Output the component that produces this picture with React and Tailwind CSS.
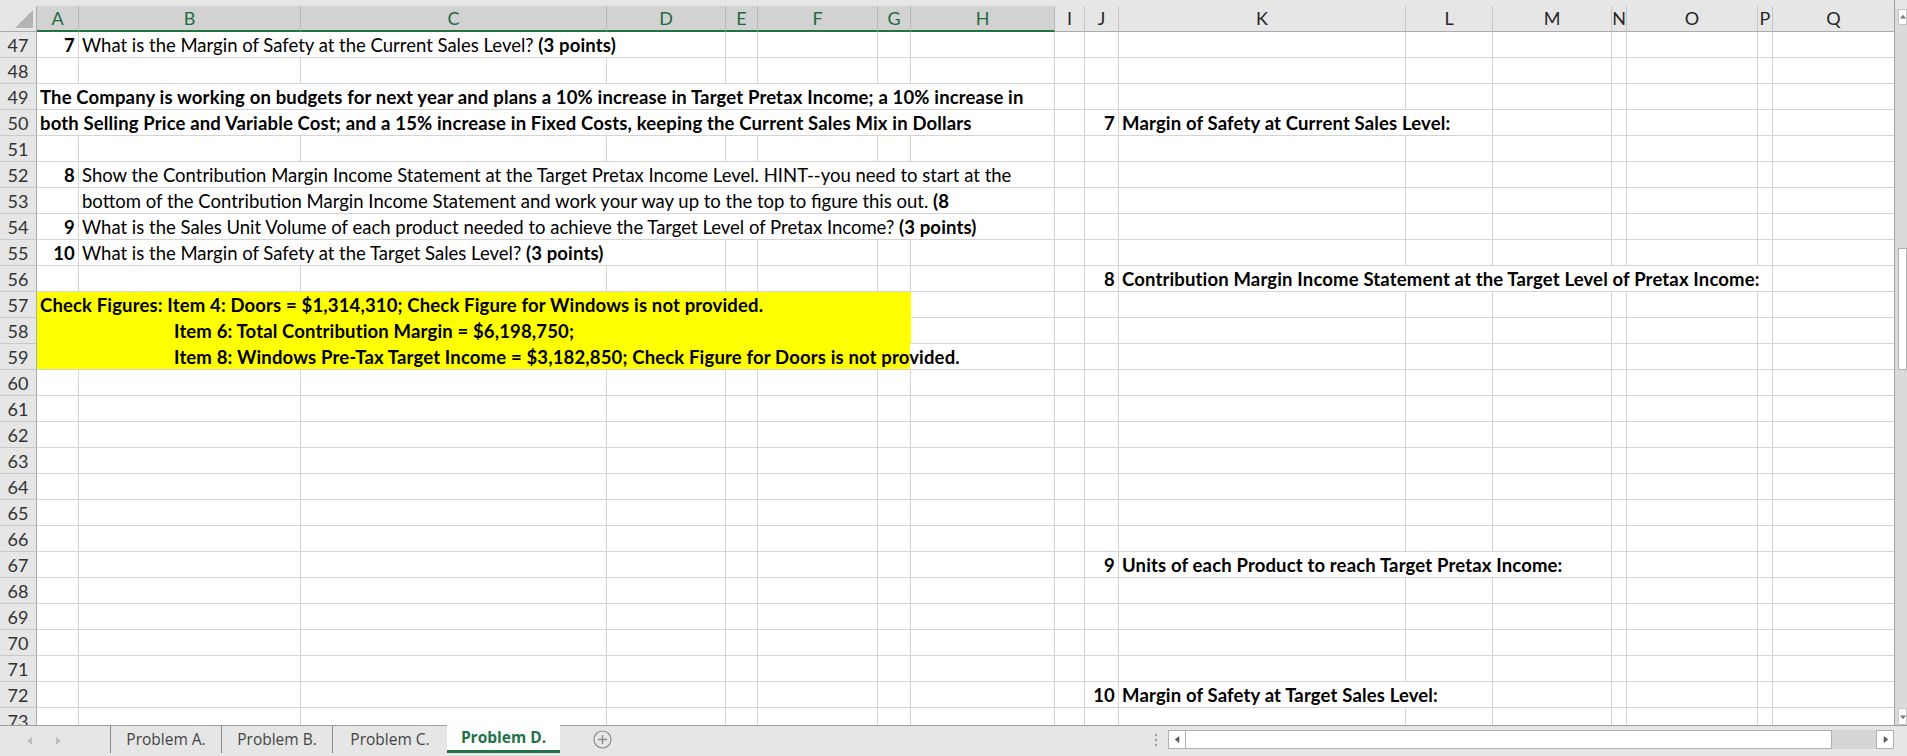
import React from 'react';

// column letters with their pixel widths, as they sit in the sheet
const cols = [
  { l: 'A', w: 'w-[42px]' },
  { l: 'B', w: 'w-[222px]' },
  { l: 'C', w: 'w-[306px]' },
  { l: 'D', w: 'w-[119px]' },
  { l: 'E', w: 'w-[32px]' },
  { l: 'F', w: 'w-[120px]' },
  { l: 'G', w: 'w-[33px]' },
  { l: 'H', w: 'w-[144px]' },
  { l: 'I', w: 'w-[30px]' },
  { l: 'J', w: 'w-[34px]' },
  { l: 'K', w: 'w-[287px]' },
  { l: 'L', w: 'w-[87px]' },
  { l: 'M', w: 'w-[119px]' },
  { l: 'N', w: 'w-[15px]' },
  { l: 'O', w: 'w-[131px]' },
  { l: 'P', w: 'w-[15px]' },
  { l: 'Q', w: 'w-[122px]' },
];

const selected = ['A', 'B', 'C', 'D', 'E', 'F', 'G', 'H'];

const YELLOW = 'bg-[#ffff00] border-[#ffff00]';

// cells with content; "to" means the text runs over into the next columns
const rowData = {
  47: [
    { c: 'A', w: 'w-[42px]', right: true, parts: [['7', true]] },
    { c: 'B', to: 'D', w: 'w-[647px]', parts: [['What is the Margin of Safety at the Current Sales Level? ', false], ['(3 points)', true]] },
  ],
  49: [
    { c: 'A', to: 'H', w: 'w-[1018px]', parts: [['The Company is working on budgets for next year and plans a 10% increase in Target Pretax Income; a 10% increase in', true]] },
  ],
  50: [
    { c: 'A', to: 'H', w: 'w-[1018px]', parts: [['both Selling Price and Variable Cost; and a 15% increase in Fixed Costs, keeping the Current Sales Mix in Dollars', true]] },
    { c: 'J', w: 'w-[34px]', right: true, parts: [['7', true]] },
    { c: 'K', to: 'L', w: 'w-[374px]', parts: [['Margin of Safety at Current Sales Level:', true]] },
  ],
  52: [
    { c: 'A', w: 'w-[42px]', right: true, parts: [['8', true]] },
    { c: 'B', to: 'H', w: 'w-[976px]', parts: [['Show the Contribution Margin Income Statement at the Target Pretax Income Level. HINT--you need to start at the', false]] },
  ],
  53: [
    { c: 'B', to: 'H', w: 'w-[976px]', parts: [['bottom of the Contribution Margin Income Statement and work your way up to the top to figure this out. ', false], ['(8', true]] },
  ],
  54: [
    { c: 'A', w: 'w-[42px]', right: true, parts: [['9', true]] },
    { c: 'B', to: 'H', w: 'w-[976px]', parts: [['What is the Sales Unit Volume of each product needed to achieve the Target Level of Pretax Income? ', false], ['(3 points)', true]] },
  ],
  55: [
    { c: 'A', w: 'w-[42px]', right: true, parts: [['10', true]] },
    { c: 'B', to: 'D', w: 'w-[647px]', parts: [['What is the Margin of Safety at the Target Sales Level? ', false], ['(3 points)', true]] },
  ],
  56: [
    { c: 'J', w: 'w-[34px]', right: true, parts: [['8', true]] },
    { c: 'K', to: 'P', w: 'w-[654px]', parts: [['Contribution Margin Income Statement at the Target Level of Pretax Income:', true]] },
  ],
  57: [
    { c: 'A', to: 'G', w: 'w-[874px]', bg: YELLOW, parts: [['Check Figures: Item 4: Doors = $1,314,310; Check Figure for Windows is not provided.', true]] },
  ],
  58: [
    { c: 'A', to: 'G', w: 'w-[874px]', bg: YELLOW, pad: 'pl-[137px]', parts: [['Item 6: Total Contribution Margin = $6,198,750;', true]] },
  ],
  59: [
    { c: 'A', to: 'H', w: 'w-[1018px]', bg: 'bg-[linear-gradient(to_right,#ffff00_873px,#ffffff_873px)] border-[#d4d4d4]', pad: 'pl-[137px]', parts: [['Item 8: Windows Pre-Tax Target Income = $3,182,850; Check Figure for Doors is not provided.', true]] },
  ],
  67: [
    { c: 'J', w: 'w-[34px]', right: true, parts: [['9', true]] },
    { c: 'K', to: 'M', w: 'w-[493px]', parts: [['Units of each Product to reach Target Pretax Income:', true]] },
  ],
  72: [
    { c: 'J', w: 'w-[34px]', right: true, parts: [['10', true]] },
    { c: 'K', to: 'L', w: 'w-[374px]', parts: [['Margin of Safety at Target Sales Level:', true]] },
  ],
};

const rowNumbers = Array.from({ length: 27 }, (_, i) => 47 + i);

const ColumnHeader = () => (
  <div className="flex h-[26px] shrink-0">
    <div className="w-[37px] shrink-0 bg-[#e6e6e6] border-r border-b border-[#ababab] flex items-end justify-end pr-[3px] pb-[3px]">
      <svg width="18" height="18" viewBox="0 0 18 18">
        <polygon points="18,0 18,18 0,18" fill="#b4b4b4" />
      </svg>
    </div>
    {cols.map((col) => {
      const isSel = selected.includes(col.l);
      return (
        <div
          key={col.l}
          className={`${col.w} shrink-0 flex items-center justify-center text-[18px] border-r ${
            isSel
              ? 'bg-[#d2d2d2] border-r-[#b8b8b8] border-b-2 border-b-[#217346] text-[#1e6b41]'
              : 'bg-[#e6e6e6] border-r-[#c6c6c6] border-b border-b-[#ababab] text-[#262626]'
          }`}
        >
          {col.l}
        </div>
      );
    })}
  </div>
);

const SegCell = ({ seg }) => (
  <div
    className={`${seg.w} shrink-0 h-full flex items-center overflow-hidden whitespace-nowrap border-r border-b ${
      seg.bg || 'border-[#d4d4d4]'
    } ${seg.right ? 'justify-end pr-[3px]' : 'pl-[3px]'} ${seg.pad || ''}`}
  >
    {seg.parts.map(([t, b], i) => (
      <span key={i} className={b ? 'font-bold tracking-[0.15px] whitespace-pre' : 'whitespace-pre'}>
        {t}
      </span>
    ))}
  </div>
);

const SheetRow = ({ n }) => {
  const segs = rowData[n] || [];
  const cells = [];
  let i = 0;
  while (i < cols.length) {
    const seg = segs.find((s) => s.c === cols[i].l);
    if (seg) {
      cells.push(<SegCell key={cols[i].l} seg={seg} />);
      const end = seg.to ? cols.findIndex((c) => c.l === seg.to) : i;
      i = end + 1;
    } else {
      cells.push(<div key={cols[i].l} className={`${cols[i].w} shrink-0 h-full border-r border-b border-[#d4d4d4]`} />);
      i++;
    }
  }
  return (
    <div className="flex h-[26px] shrink-0 text-[18.5px] text-black leading-[26px]">
      <div className="w-[37px] shrink-0 h-full bg-[#e6e6e6] border-r border-r-[#ababab] border-b border-b-[#c8c8c8] flex items-center justify-center text-[#333] text-[18px]">
        {n}
      </div>
      {cells}
    </div>
  );
};

const Triangle = ({ dir, color = '#a6a6a6', size = 8 }) => {
  const pts = {
    left: '6,0 6,8 1,4',
    right: '2,0 2,8 7,4',
    up: '0,6 8,6 4,1',
    down: '0,2 8,2 4,7',
  }[dir];
  return (
    <svg width={size} height={size} viewBox="0 0 8 8">
      <polygon points={pts} fill={color} />
    </svg>
  );
};

const VerticalScrollbar = () => (
  <div className="w-[12px] shrink-0 h-full bg-[#dadada] flex flex-col">
    <div className="h-[9px] bg-[#e6e6e6]" />
    <div className="h-[16px] ml-[3px] bg-white border border-[#c6c6c6] flex items-center justify-center">
      <Triangle dir="up" color="#777" size={6} />
    </div>
    <div className="h-[223px]" />
    <div className="h-[122px] ml-[3px] bg-white border border-[#b0b0b0]" />
    <div className="flex-1" />
    <div className="h-[17px] ml-[3px] bg-white border border-[#c6c6c6] flex items-center justify-center">
      <Triangle dir="down" color="#777" size={6} />
    </div>
  </div>
);

const tabs = [
  { name: 'Problem A.', w: 'w-[111px]' },
  { name: 'Problem B.', w: 'w-[111px]' },
  { name: 'Problem C.', w: 'w-[115px]' },
];

const TabBar = () => (
  <div className="h-[31px] shrink-0 flex bg-[#e6e6e6] border-t border-[#9e9e9e] font-['Open_Sans',sans-serif] text-[15.5px] text-[#444]">
    <div className="w-[110px] shrink-0 flex items-center pl-[26px] gap-[20px]">
      <Triangle dir="left" color="#bdbdbd" />
      <Triangle dir="right" color="#bdbdbd" />
    </div>
    {tabs.map((t) => (
      <div key={t.name} className={`${t.w} shrink-0 h-[27px] flex items-center justify-center border-l border-[#8a8a8a]`}>
        {t.name}
      </div>
    ))}
    <div className="w-[113px] shrink-0 h-[28px] -mt-px bg-white border-b-[3px] border-[#217346] flex items-center justify-center font-bold text-[#217346]">
      Problem D.
    </div>
    <div className="ml-[33px] flex items-center h-[27px]">
      <svg width="19" height="19" viewBox="0 0 19 19">
        <circle cx="9.5" cy="9.5" r="8.5" fill="none" stroke="#8a8a8a" strokeWidth="1.2" />
        <path d="M9.5 5v9M5 9.5h9" stroke="#8a8a8a" strokeWidth="1.4" />
      </svg>
    </div>
    <div className="flex-1" />
    <div className="flex items-center h-[27px] pr-[10px]">
      <svg width="4" height="14" viewBox="0 0 4 14">
        <circle cx="2" cy="2" r="1.2" fill="#9a9a9a" />
        <circle cx="2" cy="7" r="1.2" fill="#9a9a9a" />
        <circle cx="2" cy="12" r="1.2" fill="#9a9a9a" />
      </svg>
    </div>
    <div className="flex items-start pt-[4px] pr-[13px]">
      <div className="w-[18px] h-[19px] bg-white border border-[#b0b0b0] flex items-center justify-center">
        <Triangle dir="left" color="#555" size={7} />
      </div>
      <div className="w-[646px] h-[19px] bg-white border-y border-r border-[#b0b0b0]" />
      <div className="w-[44px] h-[19px] bg-[#d6d6d6]" />
      <div className="w-[18px] h-[19px] bg-white border border-[#b0b0b0] flex items-center justify-center">
        <Triangle dir="right" color="#555" size={7} />
      </div>
    </div>
  </div>
);

export default function App() {
  return (
    <div className="w-[1907px] h-[756px] overflow-hidden flex flex-col bg-white font-['Lato',sans-serif]">
      <div className="flex h-[725px] shrink-0">
        <div className="w-[1895px] shrink-0 flex flex-col overflow-hidden border-r border-[#a0a0a0]">
          <div className="h-[6px] shrink-0 bg-[#e6e6e6]" />
          <ColumnHeader />
          <div className="flex-1 overflow-hidden flex flex-col">
            {rowNumbers.map((n) => (
              <SheetRow key={n} n={n} />
            ))}
          </div>
        </div>
        <VerticalScrollbar />
      </div>
      <TabBar />
    </div>
  );
}
